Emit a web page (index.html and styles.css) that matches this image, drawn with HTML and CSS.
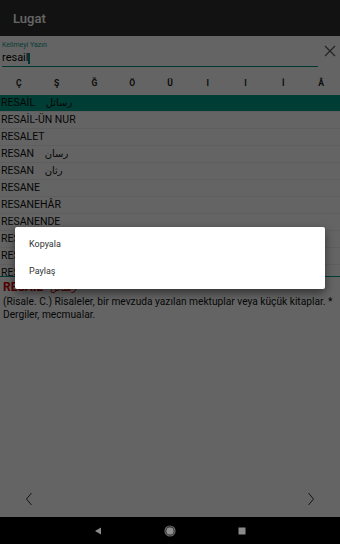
FILE: index.html
```html
<!DOCTYPE html>
<html lang="tr">
<head>
<meta charset="utf-8">
<title>Lugat</title>
<link rel="stylesheet" href="styles.css">
</head>
<body>
<div class="screen">
  <header class="appbar">Lugat</header>
  <div class="search">
    <div class="field">
      <label class="label">Kelimeyi Yazın</label>
      <div class="input">resail<span class="cursor"></span></div>
    </div>
    <svg class="clear" viewBox="0 0 12 12" width="12" height="12"><path d="M1 1L11 11M11 1L1 11" stroke="#555" stroke-width="1.2" fill="none"/></svg>
  </div>
  <div class="letters">
    <span>Ç</span><span>Ş</span><span>Ğ</span><span>Ö</span><span>Ü</span><span>I</span><span>I</span><span>İ</span><span>Â</span>
  </div>
  <div class="list">
    <div class="row selected">RESAİL <span class="ar">رسائل</span></div>
    <div class="row">RESAİL-ÜN NUR</div>
    <div class="row">RESALET</div>
    <div class="row">RESAN <span class="ar">رسان</span></div>
    <div class="row">RESAN <span class="ar">رثان</span></div>
    <div class="row">RESANE</div>
    <div class="row">RESANEHÂR</div>
    <div class="row">RESANENDE</div>
    <div class="row">RESANET</div>
    <div class="row">RESAS</div>
    <div class="row">RESASÎ</div>
  </div>
  <div class="definition">
    <div class="def-title">RESAİL <span class="ar">رسائل</span></div>
    <p class="def-text">(Risale. C.) Risaleler, bir mevzuda yazılan mektuplar veya küçük kitaplar. * Dergiler, mecmualar.</p>
  </div>
  <div class="pager">
    <svg viewBox="0 0 8 14" width="8" height="14"><path d="M6.5 1L1.5 7L6.5 13" stroke="#333" stroke-width="1" fill="none"/></svg>
    <svg viewBox="0 0 8 14" width="8" height="14"><path d="M1.5 1L6.5 7L1.5 13" stroke="#333" stroke-width="1" fill="none"/></svg>
  </div>
  <div class="scrim"></div>
  <div class="dialog">
    <div class="item">Kopyala</div>
    <div class="item">Paylaş</div>
  </div>
  <nav class="navbar">
    <svg viewBox="0 0 10 10" width="10" height="10"><path d="M8 1.5L2 5L8 8.5Z" fill="#8a8a8a"/></svg>
    <svg viewBox="0 0 12 12" width="12" height="12"><circle cx="6" cy="6" r="5" fill="none" stroke="#6a6a6a" stroke-width="1.2"/><circle cx="6" cy="6" r="3.8" fill="#8f8f8f"/></svg>
    <svg viewBox="0 0 10 10" width="10" height="10"><rect x="1.5" y="1.5" width="7" height="7" fill="#8a8a8a"/></svg>
  </nav>
</div>
</body>
</html>
```
FILE: styles.css
```css
* { box-sizing: border-box; }
html, body { margin: 0; padding: 0; }
body { font-family: Roboto, "DejaVu Sans", sans-serif; background: #000; }
.screen {
  position: relative;
  width: 340px;
  height: 544px;
  display: flex;
  flex-direction: column;
  background: #fafafa;
  overflow: hidden;
}
.appbar {
  height: 36px;
  flex: none;
  background: #2e2e2e;
  color: #ffffff;
  font-size: 13px;
  font-weight: 500;
  padding-left: 13px;
  display: flex;
  align-items: center;
}
.search {
  display: flex;
  align-items: center;
  padding: 1px 4px 0 2px;
  height: 34px;
  flex: none;
}
.field { flex: 1; }
.label {
  display: block;
  font-size: 7px;
  color: #0a9a88;
  line-height: 8px;
  height: 8px;
}
.input {
  font-size: 11px;
  color: #000;
  line-height: 16px;
  height: 18px;
  padding-top: 2px;
  border-bottom: 1.5px solid #00897b;
  display: flex;
  align-items: center;
}
.cursor {
  display: inline-block;
  width: 1.5px;
  height: 11px;
  background: #00897b;
  margin-left: 0;
}
.clear { margin-left: 6px; margin-top: -6px; }
.letters {
  display: flex;
  height: 25px;
  flex: none;
  align-items: center;
  font-size: 8.5px;
  font-weight: 700;
  color: #222;
}
.letters span { flex: 1; text-align: center; }
.list {
  height: 182px;
  flex: none;
  overflow: hidden;
  border-bottom: 1.5px solid #009688;
}
.row {
  height: 17px;
  line-height: 16px;
  font-size: 10.5px;
  color: #111;
  padding-left: 1px;
  border-bottom: 1px solid #ececec;
  white-space: nowrap;
}
.row.selected { background: #009a84; }
.ar { font-family: "DejaVu Sans", sans-serif; font-size: 10px; margin-left: 8px; }
.definition { padding: 3px 3px 0 3px; flex: none; }
.def-title {
  color: #d50000;
  font-weight: 700;
  font-size: 12px;
  line-height: 14px;
}
.def-title .ar { font-weight: 400; margin-left: 4px; }
.def-text {
  margin: 0;
  font-size: 10.2px;
  line-height: 13px;
  color: #111;
}
.pager {
  flex: 1;
  display: flex;
  justify-content: space-between;
  align-items: flex-end;
  padding: 0 25px 11px 25px;
}
.navbar {
  height: 27px;
  flex: none;
  background: #000;
  display: flex;
  justify-content: center;
  align-items: center;
  gap: 61px;
  position: relative;
  z-index: 3;
}
.scrim {
  position: absolute;
  left: 0; top: 0;
  width: 340px;
  height: 544px;
  background: rgba(0, 0, 0, 0.6);
  z-index: 1;
}
.dialog {
  position: absolute;
  left: 15px;
  top: 227px;
  width: 310px;
  height: 62px;
  background: #fff;
  border-radius: 2px;
  box-shadow: 0 4px 10px rgba(0,0,0,0.5);
  z-index: 2;
  padding-top: 4px;
}
.item {
  height: 27px;
  line-height: 27px;
  padding-left: 14px;
  font-size: 9px;
  color: #333;
}
```
